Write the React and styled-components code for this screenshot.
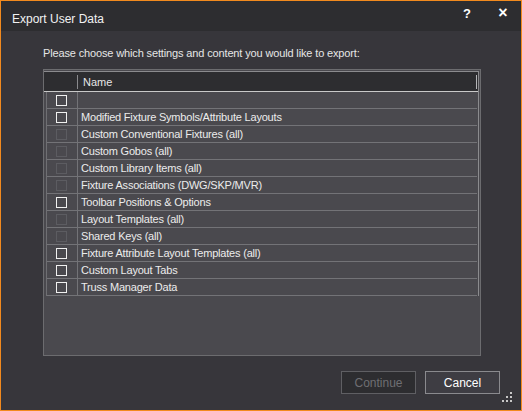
import React from 'react'
import styled, { createGlobalStyle } from 'styled-components'

const GlobalStyle = createGlobalStyle`
  html, body {
    margin: 0;
    padding: 0;
    background: #37363b;
  }
  body {
    font-family: "Liberation Sans", Arial, sans-serif;
  }
`

const Window = styled.div`
  width: 522px;
  height: 411px;
  box-sizing: border-box;
  border: 1px solid #f28a1e;
  background: #37363b;
  display: flex;
  flex-direction: column;
  position: relative;
`

const TitleBar = styled.div`
  height: 30px;
  flex: none;
  background: #2d2d30;
  display: flex;
  align-items: center;
  padding-left: 11px;
`

const Title = styled.div`
  color: #f2f2f2;
  font-size: 12px;
  padding-top: 6px;
  flex: 1;
`

const TitleButton = styled.div`
  width: 24px;
  height: 22px;
  margin-top: -6px;
  display: flex;
  align-items: center;
  justify-content: center;
  color: #ffffff;
  font-size: ${p => p.big ? '16px' : '13px'};
  font-weight: bold;
`

const Body = styled.div`
  flex: 1;
  display: flex;
  flex-direction: column;
  padding: 16px 21px 0 42px;
`

const Prompt = styled.div`
  color: #e6e6e6;
  font-size: 11px;
  letter-spacing: -0.14px;
  height: 22px;
`

const ListBox = styled.div`
  width: 438px;
  height: 287px;
  box-sizing: border-box;
  border: 1px solid #6c6c6f;
  padding: 1px 1px 0 0;
  background: #4a494e;
`

const Grid = styled.div`
  border-right: 1px solid #8b8b8e;
`

const Header = styled.div`
  height: 19px;
  background: #2d2d30;
  border-top: 1px solid #8b8b8e;
  border-bottom: 1px solid #c9c9c9;
  display: flex;
  align-items: center;
`

const HeaderSep = styled.div`
  width: 1px;
  height: 14px;
  background: ${p => p.light ? '#b5b5b8' : '#8a8a8d'};
  margin-left: ${p => p.left}px;
  margin-right: ${p => p.light ? 1 : 0}px;
`

const HeaderLabel = styled.div`
  color: #e6e6e6;
  font-size: 11px;
  margin-left: 5px;
  flex: 1;
`

const Rows = styled.div`
  margin-left: 2px;
  border-left: 1px solid #6f6f73;
  margin-right: 1px;
`

const Row = styled.div`
  height: 16px;
  display: flex;
  border-bottom: 1px solid #737377;
`

const CheckCell = styled.div`
  width: 30px;
  flex: none;
  border-right: 1px solid #737377;
  display: flex;
  align-items: center;
  justify-content: center;
`

const Box = styled.div`
  width: 9px;
  height: 9px;
  border: 1px solid ${p => p.disabled ? '#5c5c61' : '#f0f0f0'};
  margin-left: -1px;
`

const NameCell = styled.div`
  flex: 1;
  color: #ececec;
  font-size: 11px;
  letter-spacing: -0.2px;
  line-height: 16px;
  padding-left: 3px;
  white-space: nowrap;
`

const Footer = styled.div`
  display: flex;
  justify-content: flex-end;
  gap: 9px;
  margin-top: 15px;
`

const Button = styled.div`
  width: 75px;
  height: 23px;
  box-sizing: border-box;
  border: 1px solid ${p => p.disabled ? '#5f5f63' : '#8a8a8e'};
  background: ${p => p.disabled ? '#2d2d30' : '#3e3d43'};
  color: ${p => p.disabled ? '#6f6f73' : '#ffffff'};
  font-size: 12px;
  display: flex;
  align-items: center;
  justify-content: center;
`

const Grip = styled.svg`
  position: absolute;
  right: 9px;
  bottom: 8px;
`

const items = [
  { name: '', enabled: true },
  { name: 'Modified Fixture Symbols/Attribute Layouts', enabled: true },
  { name: 'Custom Conventional Fixtures (all)', enabled: false },
  { name: 'Custom Gobos (all)', enabled: false },
  { name: 'Custom Library Items (all)', enabled: false },
  { name: 'Fixture Associations (DWG/SKP/MVR)', enabled: false },
  { name: 'Toolbar Positions & Options', enabled: true },
  { name: 'Layout Templates (all)', enabled: false },
  { name: 'Shared Keys (all)', enabled: false },
  { name: 'Fixture Attribute Layout Templates (all)', enabled: true },
  { name: 'Custom Layout Tabs', enabled: true },
  { name: 'Truss Manager Data', enabled: true },
]

const App = () => (
  <Window>
    <GlobalStyle />
    <TitleBar>
      <Title>Export User Data</Title>
      <TitleButton>?</TitleButton>
      <TitleButton big style={{ marginLeft: 12, marginRight: 6 }}>×</TitleButton>
    </TitleBar>
    <Body>
      <Prompt>Please choose which settings and content you would like to export:</Prompt>
      <ListBox>
        <Grid>
          <Header>
            <HeaderSep left={33} />
            <HeaderLabel>Name</HeaderLabel>
            <HeaderSep left={0} light />
          </Header>
          <Rows>
            {items.map((it, i) => (
              <Row key={i}>
                <CheckCell>
                  <Box disabled={!it.enabled} />
                </CheckCell>
                <NameCell>{it.name}</NameCell>
              </Row>
            ))}
          </Rows>
        </Grid>
      </ListBox>
      <Footer>
        <Button disabled>Continue</Button>
        <Button>Cancel</Button>
      </Footer>
    </Body>
    <Grip width="10" height="10" viewBox="0 0 10 10">
      <g fill="#c8c8c8">
        <rect x="8" y="0" width="2" height="2" />
        <rect x="4" y="4" width="2" height="2" />
        <rect x="8" y="4" width="2" height="2" />
        <rect x="0" y="8" width="2" height="2" />
        <rect x="4" y="8" width="2" height="2" />
        <rect x="8" y="8" width="2" height="2" />
      </g>
    </Grip>
  </Window>
)

export default App
